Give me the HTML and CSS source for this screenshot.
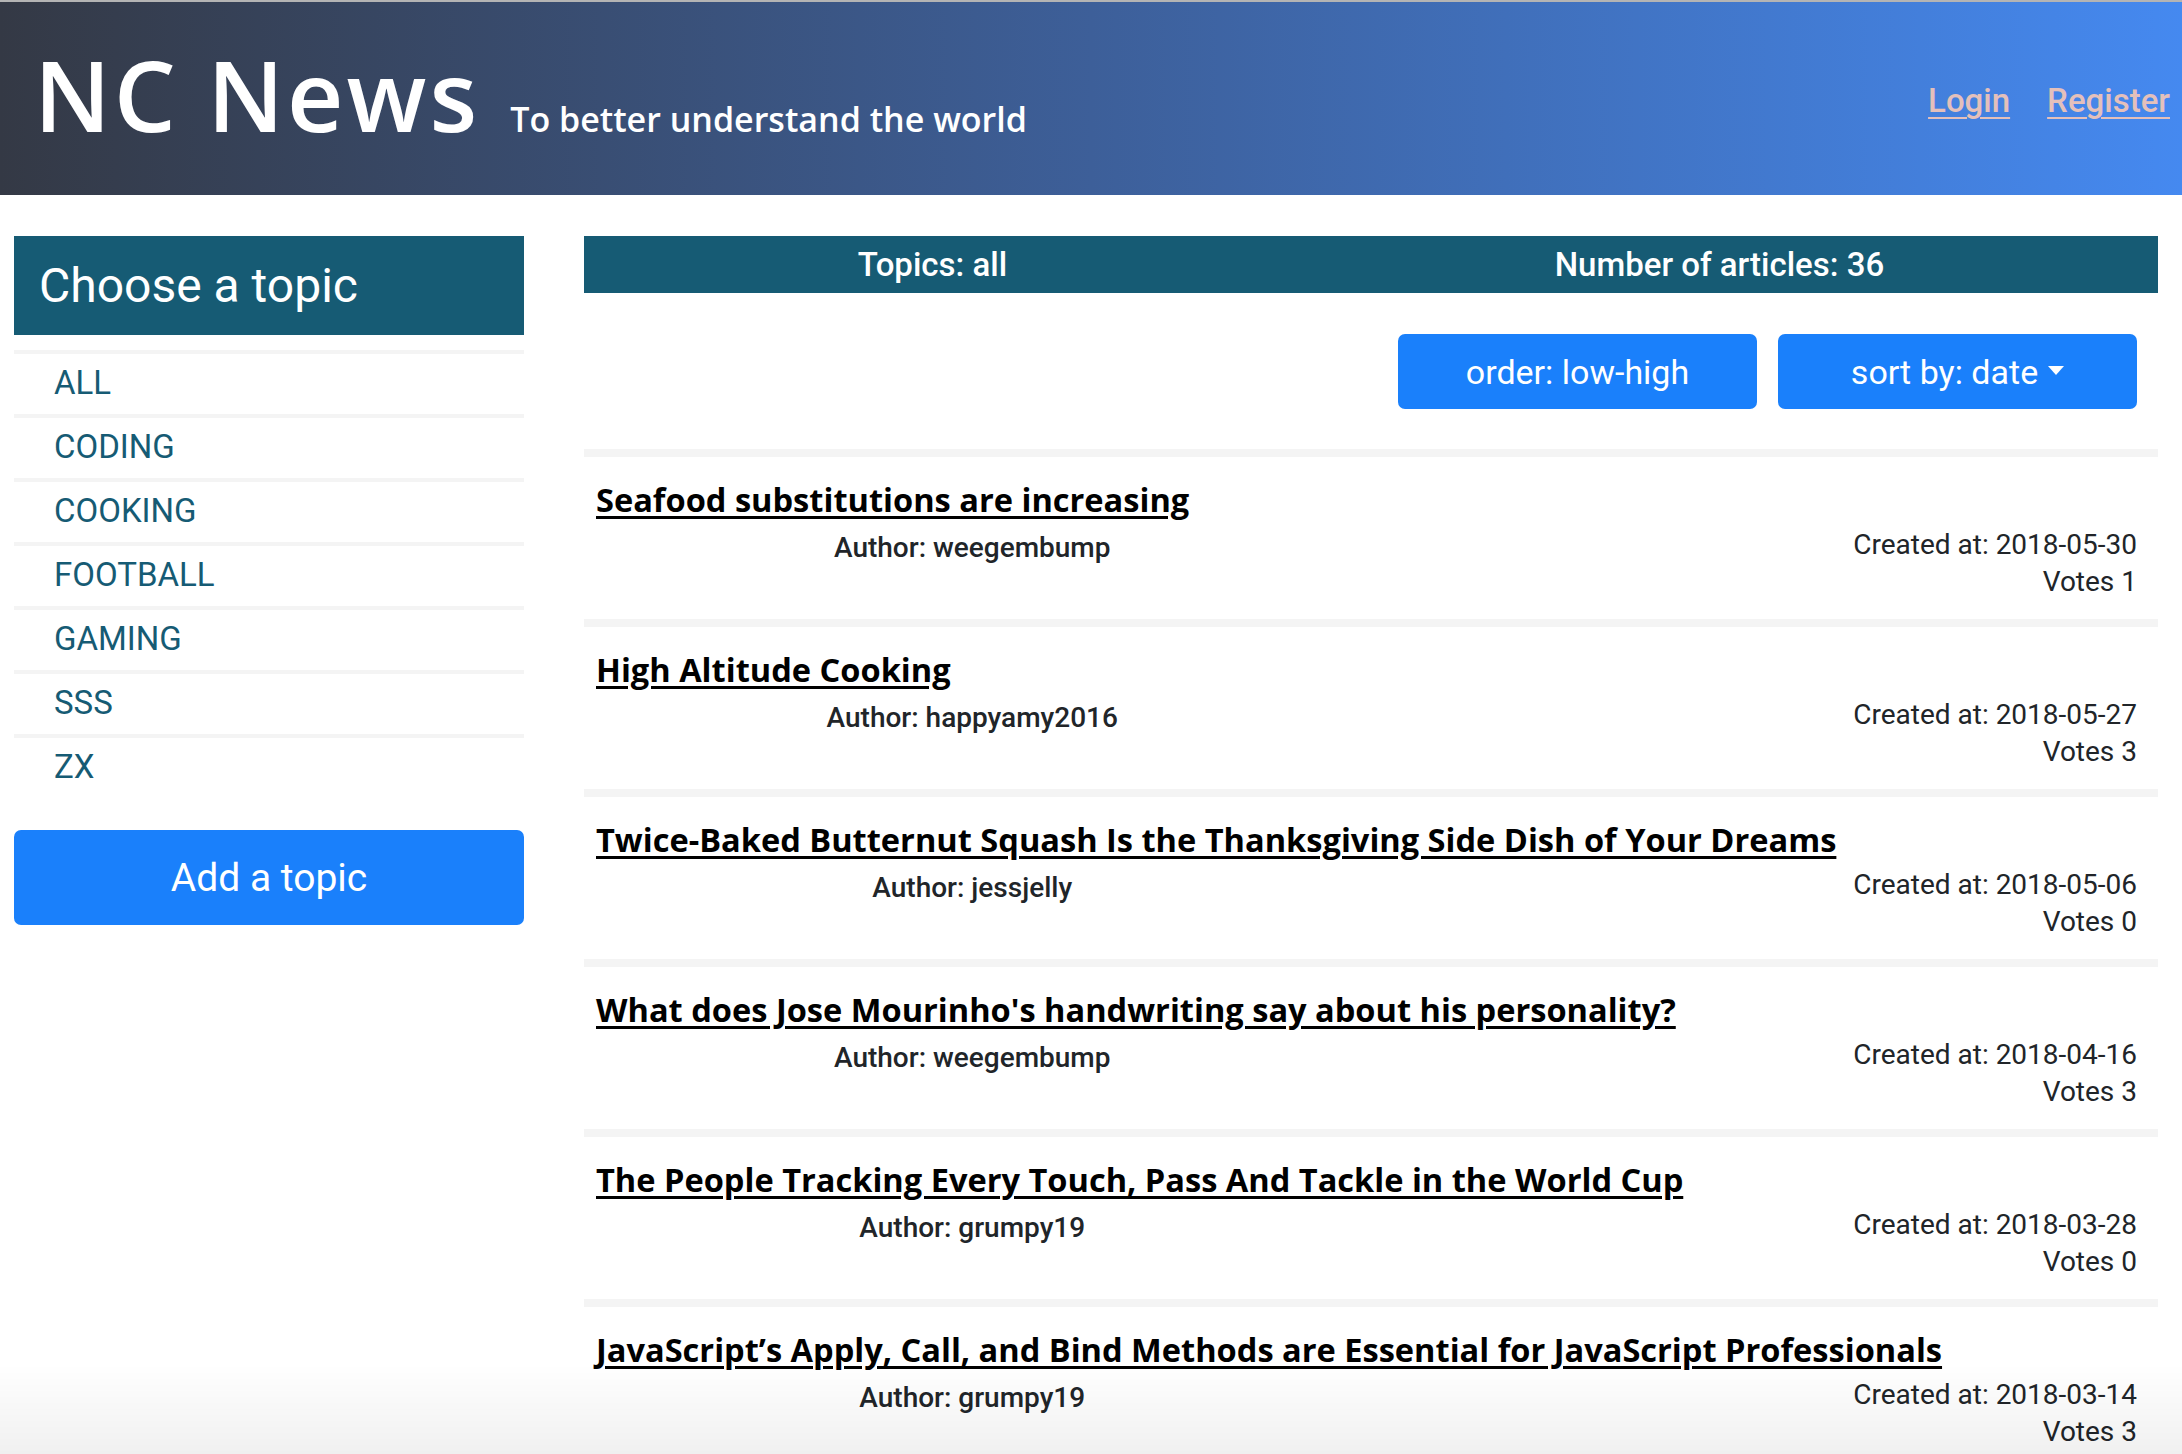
FILE: index.html
```html
<!DOCTYPE html>
<html lang="en">
<head>
<meta charset="utf-8">
<title>NC News</title>
<link rel="stylesheet" href="styles.css">
</head>
<body>
<header class="masthead">
  <div class="brand">
    <h1 class="logo">NC News</h1>
    <span class="tagline">To better understand the world</span>
  </div>
  <nav class="auth">
    <a href="#" class="auth-link">Login</a>
    <a href="#" class="auth-link">Register</a>
  </nav>
</header>
<div class="page">
  <aside class="sidebar">
    <h2 class="side-title">Choose a topic</h2>
    <ul class="topics">
      <li class="topic"><a href="#">ALL</a></li>
      <li class="topic"><a href="#">CODING</a></li>
      <li class="topic"><a href="#">COOKING</a></li>
      <li class="topic"><a href="#">FOOTBALL</a></li>
      <li class="topic"><a href="#">GAMING</a></li>
      <li class="topic"><a href="#">SSS</a></li>
      <li class="topic"><a href="#">ZX</a></li>
    </ul>
    <button class="add-topic">Add a topic</button>
  </aside>
  <main class="content">
    <div class="summary">
      <span>Topics: all</span>
      <span>Number of articles: 36</span>
    </div>
    <div class="controls">
      <button class="ctrl-btn">order: low-high</button>
      <button class="ctrl-btn">sort by: date<span class="caret"></span></button>
    </div>
    <ul class="articles">
      <li class="article">
        <a href="#" class="title">Seafood substitutions are increasing</a>
        <div class="meta">
          <div class="author">Author: weegembump</div>
          <div class="stats"><div>Created at: 2018-05-30</div><div>Votes 1</div></div>
        </div>
      </li>
      <li class="article">
        <a href="#" class="title">High Altitude Cooking</a>
        <div class="meta">
          <div class="author">Author: happyamy2016</div>
          <div class="stats"><div>Created at: 2018-05-27</div><div>Votes 3</div></div>
        </div>
      </li>
      <li class="article">
        <a href="#" class="title">Twice-Baked Butternut Squash Is the Thanksgiving Side Dish of Your Dreams</a>
        <div class="meta">
          <div class="author">Author: jessjelly</div>
          <div class="stats"><div>Created at: 2018-05-06</div><div>Votes 0</div></div>
        </div>
      </li>
      <li class="article">
        <a href="#" class="title">What does Jose Mourinho's handwriting say about his personality?</a>
        <div class="meta">
          <div class="author">Author: weegembump</div>
          <div class="stats"><div>Created at: 2018-04-16</div><div>Votes 3</div></div>
        </div>
      </li>
      <li class="article">
        <a href="#" class="title">The People Tracking Every Touch, Pass And Tackle in the World Cup</a>
        <div class="meta">
          <div class="author">Author: grumpy19</div>
          <div class="stats"><div>Created at: 2018-03-28</div><div>Votes 0</div></div>
        </div>
      </li>
      <li class="article">
        <a href="#" class="title">JavaScript’s Apply, Call, and Bind Methods are Essential for JavaScript Professionals</a>
        <div class="meta">
          <div class="author">Author: grumpy19</div>
          <div class="stats"><div>Created at: 2018-03-14</div><div>Votes 3</div></div>
        </div>
      </li>
    </ul>
  </main>
</div>
<div class="bottom-fade"></div>
</body>
</html>
```
FILE: styles.css
```css
* { box-sizing: border-box; }
html, body { margin: 0; padding: 0; }
body {
  font-family: Roboto, "Liberation Sans", sans-serif;
  color: #212529;
  background: #fff;
  overflow: hidden;
}

.masthead {
  height: 195px;
  border-top: 2px solid #b4b4b4;
  background: linear-gradient(to right, #343945 0%, #3d5f99 50%, #4589f0 100%);
  display: flex;
  justify-content: space-between;
  align-items: flex-start;
  padding: 43px 12px 0 34px;
}
.brand {
  display: flex;
  align-items: baseline;
  gap: 30px;
}
.logo {
  margin: 0;
  font-family: "Open Sans", sans-serif;
  font-weight: 600;
  font-size: 98px;
  line-height: 1;
  letter-spacing: 3px;
  color: #fff;
}
.tagline {
  font-family: "Open Sans", sans-serif;
  font-weight: 600;
  font-size: 34px;
  color: #fff;
}
.auth {
  display: flex;
  gap: 37px;
  margin-top: 39px;
}
.auth-link {
  font-family: Roboto, sans-serif;
  font-weight: 500;
  font-size: 33px;
  line-height: 1;
  color: #e4c0bb;
  text-decoration: underline;
  text-underline-offset: 5px;
  text-decoration-thickness: 2px;
}

.page {
  display: flex;
  align-items: flex-start;
  padding: 41px 24px 0 14px;
  gap: 60px;
}
.sidebar {
  width: 510px;
  flex: none;
}
.side-title {
  margin: 0;
  height: 99px;
  line-height: 99px;
  background: #165b74;
  color: #fff;
  font-weight: 400;
  font-size: 48px;
  padding-left: 25px;
}
.topics {
  list-style: none;
  margin: 15px 0 0;
  padding: 0;
}
.topic {
  border-top: 4px solid #f4f4f4;
  height: 64px;
  line-height: 58px;
  padding-left: 40px;
}
.topic a {
  color: #165b74;
  text-decoration: none;
  font-size: 33px;
}
.add-topic {
  display: block;
  width: 100%;
  height: 95px;
  margin-top: 32px;
  border: none;
  border-radius: 7px;
  background: #1a80fb;
  color: #fff;
  font-family: Roboto, sans-serif;
  font-size: 39px;
}

.content {
  flex: 1;
  min-width: 0;
}
.summary {
  height: 57px;
  background: #165b74;
  color: #fff;
  display: flex;
  justify-content: space-around;
  align-items: center;
  font-size: 33px;
  font-weight: 500;
}
.controls {
  display: flex;
  justify-content: flex-end;
  gap: 21px;
  padding-right: 21px;
  margin-top: 41px;
}
.ctrl-btn {
  width: 359px;
  height: 75px;
  border: none;
  border-radius: 7px;
  background: #1a80fb;
  color: #fff;
  font-family: Roboto, sans-serif;
  font-size: 34px;
}
.caret {
  display: inline-block;
  margin-left: 10px;
  vertical-align: 9px;
  border-top: 9px solid #fff;
  border-left: 8px solid transparent;
  border-right: 8px solid transparent;
}

.articles {
  list-style: none;
  margin: 40px 0 0;
  padding: 0;
}
.article {
  border-top: 8px solid #f4f4f4;
  padding: 21px 0 19px;
}
.title {
  display: block;
  padding-left: 12px;
  margin-bottom: 4px;
  font-family: "Open Sans", sans-serif;
  font-weight: 700;
  font-size: 32.6px;
  line-height: 44px;
  color: #000;
  text-decoration: underline;
  text-decoration-thickness: 3px;
  text-underline-offset: 4px;
  white-space: nowrap;
}
.meta {
  display: flex;
}
.author {
  flex: 1;
  text-align: center;
  font-weight: 500;
  font-size: 28px;
  line-height: 37px;
  padding-top: 3px;
}
.stats {
  flex: 1;
  text-align: right;
  padding-right: 21px;
  font-size: 28px;
  line-height: 37px;
}

.bottom-fade {
  position: fixed;
  left: 0;
  right: 0;
  bottom: 0;
  height: 90px;
  background: linear-gradient(to bottom, rgba(0,0,0,0), rgba(0,0,0,0.06));
  pointer-events: none;
}
```
